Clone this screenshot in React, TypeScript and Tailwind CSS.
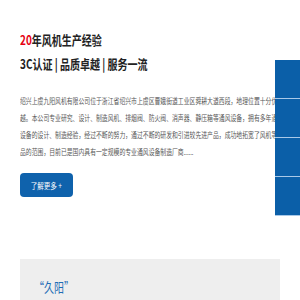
const lines = [
  "绍兴上虞九阳风机有限公司位于浙江省绍兴市上虞区曹娥街道工业区舜耕大道西段，地理位置十分优",
  "越。本公司专业研究、设计、制造风机、排烟阀、防火阀、消声器、静压箱等通风设备，拥有多年通",
  "设备的设计、制造经验，经过不断的努力，通过不断的研发和引进较先进产品，成功地拓宽了风机等",
  "品的范围，目前已是国内具有一定规模的专业通风设备制造厂商......",
];

const SideBar = () => (
  <div className="absolute right-0 top-[60px] flex w-[25px] flex-col">
    {[0, 1, 2, 3].map((i) => (
      <div key={i} className="h-[39px] border-b border-[#a9c9e8] bg-[#0b5fa8]" />
    ))}
  </div>
);

const Intro = () => (
  <div className="px-5 pt-[28px]">
    <h1 className="origin-left scale-x-[0.77] whitespace-nowrap text-[13px] font-bold leading-6 text-[#222]">
      <span className="text-[#e60012]">20</span>年风机生产经验
    </h1>
    <h2 className="origin-left scale-x-[0.77] whitespace-nowrap text-[13px] font-bold leading-6 text-[#222]">
      3C认证 | 品质卓越 | 服务一流
    </h2>
    <div className="mt-[16px] text-[7.6px] leading-[17px] text-[#555]">
      {lines.map((l) => (
        <p key={l} className="origin-left scale-x-[0.77] whitespace-nowrap">
          {l}
        </p>
      ))}
    </div>
    <button
      type="button"
      className="mt-[13px] flex h-6 w-[53px] items-center justify-center rounded-sm bg-[#0f62ac]"
    >
      <span className="inline-block scale-x-[0.77] whitespace-nowrap text-[8.5px] text-white">了解更多 +</span>
    </button>
  </div>
);

export default function App() {
  return (
    <div className="relative h-[300px] w-[300px] overflow-hidden bg-white font-['Noto_Sans_CJK_SC',sans-serif]">
      <Intro />
      <div className="mx-5 mt-[62px] h-[60px] bg-[#eeeeee] pl-[14px] pt-[19px]">
        <p className="origin-left scale-x-[0.77] whitespace-nowrap text-[13px] leading-[18px] text-[#1d6db5]">“久阳”</p>
      </div>
      <SideBar />
    </div>
  );
}
